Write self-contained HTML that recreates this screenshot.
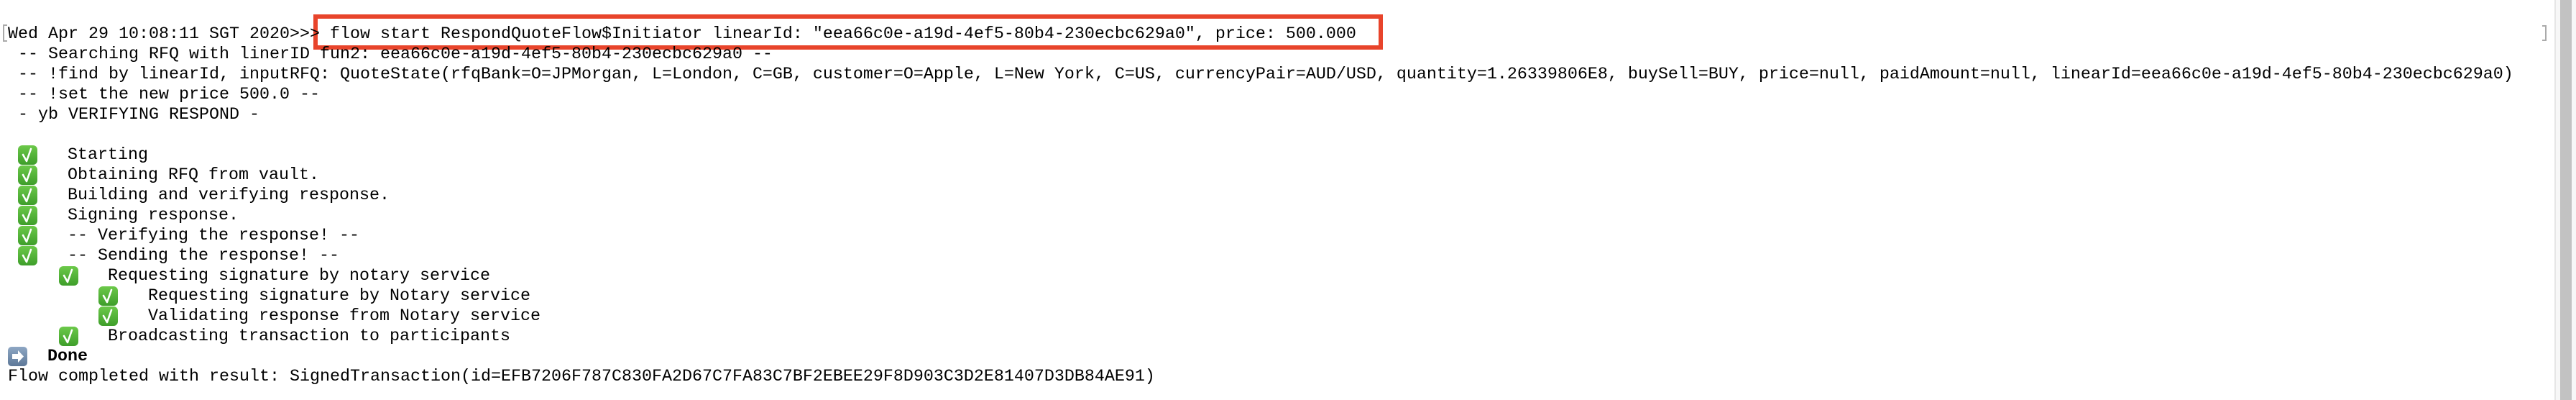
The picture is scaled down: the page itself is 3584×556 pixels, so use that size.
<!DOCTYPE html>
<html><head><meta charset="utf-8"><style>
html,body{margin:0;padding:0;background:#fff;width:3584px;height:556px;overflow:hidden;position:relative}
.l{position:absolute;left:11px;height:28px;line-height:28px;font-family:"Liberation Mono",monospace;font-size:23.33px;color:#000;white-space:pre}
.ck{position:absolute;width:27px;height:27px;border-radius:6px;background:linear-gradient(#6cc94a,#3e9e2a);}
.ar{position:absolute;width:27px;height:27px;border-radius:5px;background:linear-gradient(#8ea7c4,#5d7898);}
</style></head><body>
<svg width="0" height="0" style="position:absolute"><defs><symbol id="c" viewBox="0 0 27 27"><path d="M7 13l5 9 6-17" fill="none" stroke="#fff" stroke-width="2.6" stroke-linejoin="round" stroke-linecap="round"/></symbol></defs></svg>
<div style="position:absolute;left:4px;top:34px;width:4px;height:20px;border:2px solid #aaa;border-right:none"></div>
<div style="position:absolute;left:3537px;top:35px;width:4px;height:18px;border:2px solid #aaa;border-left:none"></div>
<div style="position:absolute;left:3554px;top:0;width:30px;height:556px;background:#f7f7f7;border-left:2px solid #e6e6e6"></div>
<div style="position:absolute;left:3562px;top:0;width:16px;height:556px;background:#c2c2c2"></div>
<div style="position:absolute;left:436px;top:20px;width:1476px;height:37px;border:6px solid #e8442b"></div>
<div class="l" style="top:34px">Wed Apr 29 10:08:11 SGT 2020&gt;&gt;&gt; flow start RespondQuoteFlow$Initiator linearId: "eea66c0e-a19d-4ef5-80b4-230ecbc629a0", price: 500.000</div>
<div class="l" style="top:62px"> -- Searching RFQ with linerID fun2: eea66c0e-a19d-4ef5-80b4-230ecbc629a0 --</div>
<div class="l" style="top:90px"> -- !find by linearId, inputRFQ: QuoteState(rfqBank=O=JPMorgan, L=London, C=GB, customer=O=Apple, L=New York, C=US, currencyPair=AUD/USD, quantity=1.26339806E8, buySell=BUY, price=null, paidAmount=null, linearId=eea66c0e-a19d-4ef5-80b4-230ecbc629a0)</div>
<div class="l" style="top:118px"> -- !set the new price 500.0 --</div>
<div class="l" style="top:146px"> - yb VERIFYING RESPOND -</div>

<svg class="ck" style="left:25px;top:202px"><use href="#c"/></svg><div class="l" style="left:94px;top:202px">Starting</div>
<svg class="ck" style="left:25px;top:230px"><use href="#c"/></svg><div class="l" style="left:94px;top:230px">Obtaining RFQ from vault.</div>
<svg class="ck" style="left:25px;top:258px"><use href="#c"/></svg><div class="l" style="left:94px;top:258px">Building and verifying response.</div>
<svg class="ck" style="left:25px;top:286px"><use href="#c"/></svg><div class="l" style="left:94px;top:286px">Signing response.</div>
<svg class="ck" style="left:25px;top:314px"><use href="#c"/></svg><div class="l" style="left:94px;top:314px">-- Verifying the response! --</div>
<svg class="ck" style="left:25px;top:342px"><use href="#c"/></svg><div class="l" style="left:94px;top:342px">-- Sending the response! --</div>
<svg class="ck" style="left:82px;top:370px"><use href="#c"/></svg><div class="l" style="left:150px;top:370px">Requesting signature by notary service</div>
<svg class="ck" style="left:137px;top:398px"><use href="#c"/></svg><div class="l" style="left:206px;top:398px">Requesting signature by Notary service</div>
<svg class="ck" style="left:137px;top:426px"><use href="#c"/></svg><div class="l" style="left:206px;top:426px">Validating response from Notary service</div>
<svg class="ck" style="left:82px;top:454px"><use href="#c"/></svg><div class="l" style="left:150px;top:454px">Broadcasting transaction to participants</div>
<div class="ar" style="left:11px;top:482px"><svg width="27" height="27" viewBox="0 0 27 27"><path d="M6 10h8V5l8 8.5-8 8.5v-5H6z" fill="#fff"/></svg></div>
<div class="l" style="left:66px;top:482px;font-weight:bold">Done</div>
<div class="l" style="top:510px">Flow completed with result: SignedTransaction(id=EFB7206F787C830FA2D67C7FA83C7BF2EBEE29F8D903C3D2E81407D3DB84AE91)</div>
</body></html>
